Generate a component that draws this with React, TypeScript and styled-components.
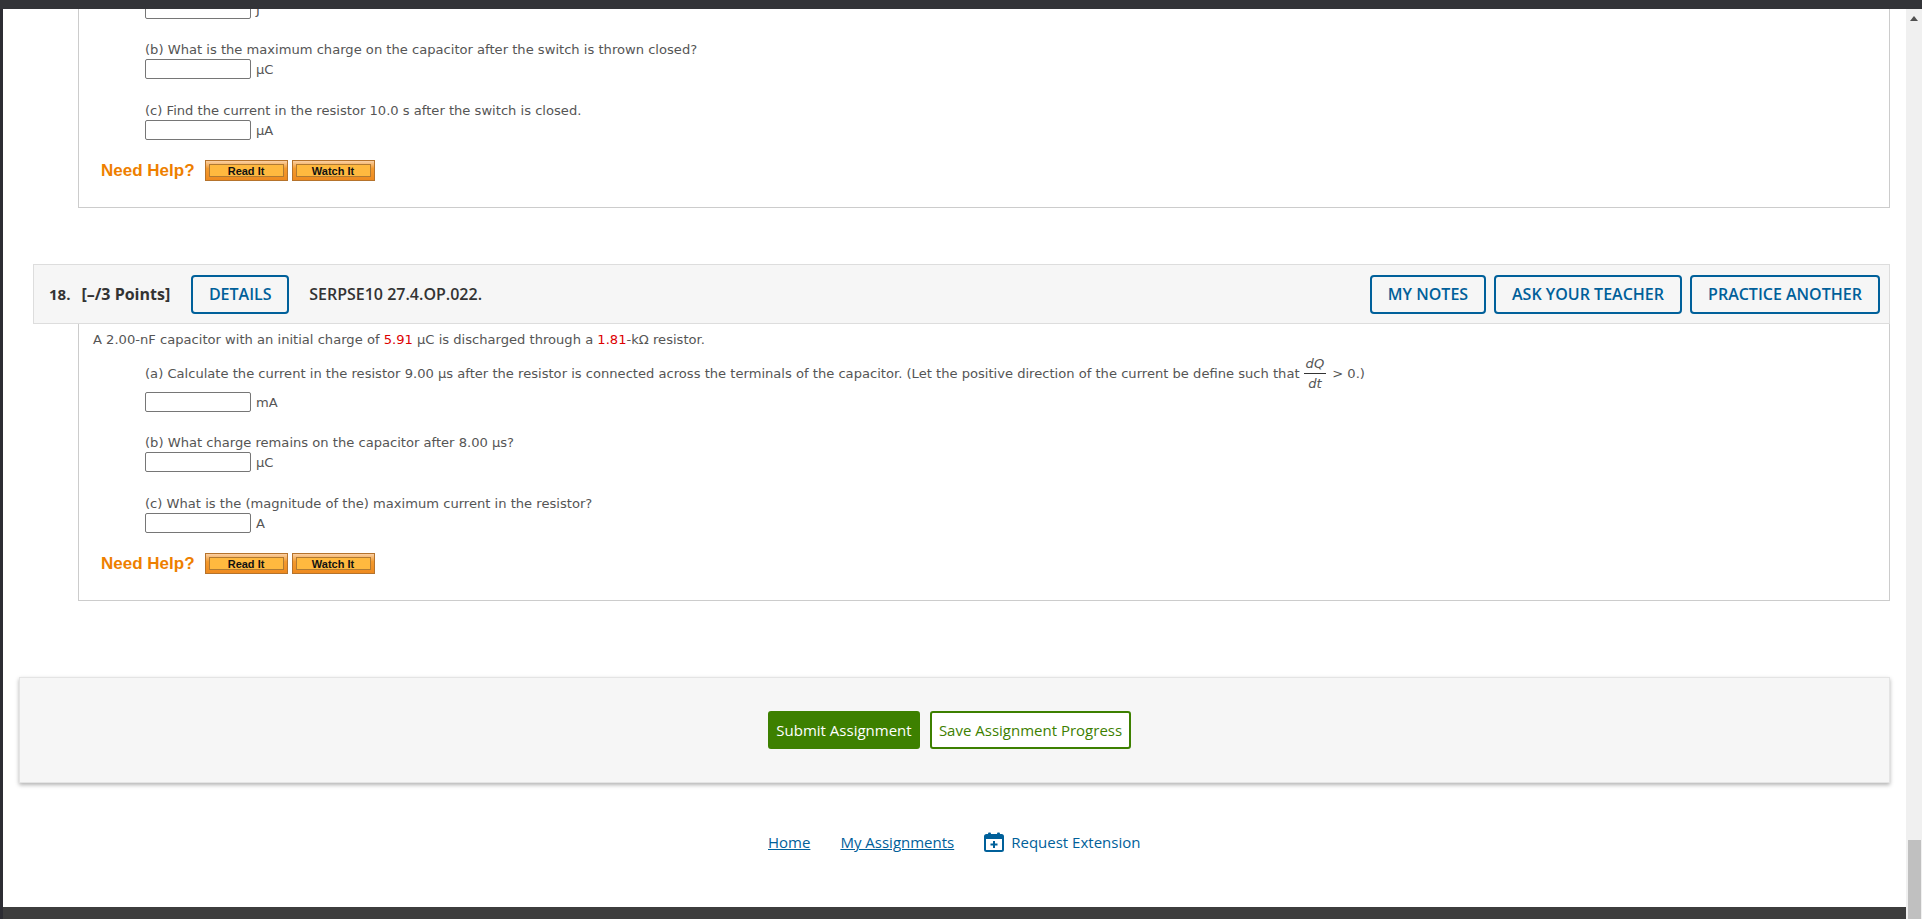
import { createGlobalStyle, styled } from "styled-components";

const GlobalStyle = createGlobalStyle`
  html, body { margin: 0; padding: 0; background: #fff; overflow: hidden; }
`;

const BLUE = "#00609a";
const GREEN = "#3d8000";

const Frame = styled.div`
  display: flex;
  flex-direction: column;
  height: 919px;
  overflow: hidden;
`;

const TopBar = styled.div`
  height: 9px;
  flex: none;
  background: #333438;
`;

const Middle = styled.div`
  display: flex;
  flex: 1;
  min-height: 0;
`;

const LeftEdge = styled.div`
  width: 3px;
  flex: none;
  background: #2d2d33;
`;

const Column = styled.div`
  display: flex;
  flex-direction: column;
  flex: 1;
  min-width: 0;
`;

const Viewport = styled.div`
  flex: 1;
  min-height: 0;
  overflow: hidden;
`;

const Content = styled.div`
  margin-top: -10px;
`;

const BottomBar = styled.div`
  height: 12px;
  flex: none;
  background: #3d3d3d;
`;

const Scrollbar = styled.div`
  width: 16px;
  flex: none;
  display: flex;
  flex-direction: column;
  align-items: flex-end;
  justify-content: space-between;
  background: #f0f0f0;
`;

const ScrollArrow = styled.div`
  width: 0;
  height: 0;
  margin: 7px 4px 0 0;
  border-left: 4px solid transparent;
  border-right: 4px solid transparent;
  border-bottom: 5px solid #505050;
`;

const ScrollThumb = styled.div`
  width: 13px;
  height: 79px;
  margin-right: 1px;
  background: #c0c0c0;
`;

const QuestionBody = styled.div<{ $top?: number }>`
  margin: 0 16px 0 75px;
  padding: ${({ $top }) => $top ?? 0}px 0 26px 66px;
  border: 1px solid #cccccc;
  border-top: 0;
  font-family: "DejaVu Sans", Verdana, sans-serif;
  font-size: 13.1px;
  line-height: 20px;
  color: #555555;
`;

const Intro = styled.div`
  margin: 0 0 13px -52px;
`;

const Red = styled.span`
  color: #dd0000;
`;

const Prompt = styled.div`
  display: flex;
  align-items: flex-start;
  height: 20px;
  line-height: 22px;
  white-space: pre;
`;

const Fraction = styled.span`
  display: inline-flex;
  flex-direction: column;
  align-items: center;
  align-self: center;
  margin: 0 6px 0 4px;
  font-style: italic;
  line-height: 15px;
`;

const Numerator = styled.span`
  padding: 0 2px 2px;
  border-bottom: 1px solid #333333;
`;

const Denominator = styled.span`
  padding-top: 2px;
`;

const AnswerRow = styled.div<{ $top?: number; $bottom?: number }>`
  display: flex;
  align-items: center;
  gap: 5px;
  height: 20px;
  margin: ${({ $top }) => $top ?? 0}px 0 ${({ $bottom }) => $bottom ?? 20}px;
`;

const AnswerInput = styled.div`
  box-sizing: border-box;
  width: 106px;
  height: 20px;
  background: #fff;
  border: 1px solid #767676;
  border-radius: 2px;
`;

const AnswerUnit = styled.span`
  padding-top: 2px;
`;

const HelpRow = styled.div`
  display: flex;
  align-items: center;
  height: 21px;
  margin-left: -44px;
`;

const HelpLabel = styled.span`
  margin-right: 10px;
  font-family: "Liberation Sans", Arial, sans-serif;
  font-size: 17px;
  font-weight: 700;
  color: #ee7f00;
`;

const HelpButton = styled.span`
  box-sizing: border-box;
  display: flex;
  width: 83px;
  height: 21px;
  margin-right: 4px;
  padding: 3px;
  border: 1px solid #b5732c;
  background: linear-gradient(#fad0a4, #f39a2e 40%, #ee8a1f);
`;

const HelpButtonFace = styled.span`
  flex: 1;
  display: flex;
  align-items: center;
  justify-content: center;
  border: 1px solid #b07a33;
  background: #ffb93f;
  font-family: "Liberation Sans", Arial, sans-serif;
  font-size: 11px;
  font-weight: 700;
  color: #111111;
`;

const QuestionHeader = styled.div`
  box-sizing: border-box;
  display: flex;
  align-items: center;
  height: 60px;
  margin: 56px 16px 0 30px;
  padding: 0 9px 0 15px;
  background: #f6f6f6;
  border: 1px solid #dddddd;
  font-family: "Open Sans", sans-serif;
  font-size: 16px;
  color: #333333;
`;

const QuestionNumber = styled.span`
  margin-right: 11px;
  font-weight: 700;
  font-size: 15px;
`;

const Points = styled.span`
  margin-right: 13px;
  font-size: 16px;
  font-weight: 700;
`;

const Reference = styled.span`
  margin-left: 20px;
  font-weight: 600;
`;

const Spacer = styled.span`
  flex: 1;
`;

const OutlineButton = styled.span<{ $width: number }>`
  box-sizing: border-box;
  display: flex;
  align-items: center;
  justify-content: center;
  width: ${({ $width }) => $width}px;
  height: 39px;
  margin-left: 8px;
  border: 2px solid ${BLUE};
  border-radius: 4px;
  background: #f6f6f6;
  font-weight: 600;
  color: ${BLUE};
  &:first-of-type {
    margin-left: 0;
  }
`;

const SubmitPanel = styled.div`
  display: flex;
  justify-content: center;
  gap: 10px;
  box-sizing: border-box;
  height: 106px;
  margin: 76px 16px 0 16px;
  padding: 33px 10px 0 0;
  background: #f6f6f6;
  border: 1px solid #e4e4e4;
  box-shadow: 0 2px 4px rgba(0, 0, 0, 0.3);
  font-family: "Open Sans", sans-serif;
  font-size: 15px;
`;

const SubmitButton = styled.span<{ $solid?: boolean }>`
  box-sizing: border-box;
  display: flex;
  align-items: center;
  justify-content: center;
  height: 38px;
  width: ${({ $solid }) => ($solid ? 152 : 201)}px;
  border: 2px solid ${GREEN};
  border-radius: 3px;
  background: ${({ $solid }) => ($solid ? GREEN : "#fff")};
  color: ${({ $solid }) => ($solid ? "#fff" : GREEN)};
`;

const FooterNav = styled.div`
  display: flex;
  align-items: center;
  height: 24px;
  margin-top: 47px;
  padding-left: 765px;
  font-family: "Open Sans", sans-serif;
  font-size: 15px;
  color: ${BLUE};
`;

const FooterLink = styled.span`
  margin-right: 30px;
  text-decoration: underline;
`;

const FooterAction = styled.span`
  display: flex;
  align-items: center;
  gap: 7px;
`;

function CalendarPlus() {
  return (
    <svg width="20" height="20" viewBox="0 0 20 20" aria-hidden="true">
      <rect x="1" y="3" width="18" height="16" rx="1.5" fill="none" stroke={BLUE} strokeWidth="2" />
      <rect x="1" y="3" width="18" height="4" fill={BLUE} />
      <rect x="4" y="0.5" width="3" height="4" rx="1" fill={BLUE} />
      <rect x="13" y="0.5" width="3" height="4" rx="1" fill={BLUE} />
      <path d="M10 9v7M6.5 12.5h7" stroke={BLUE} strokeWidth="2" fill="none" />
    </svg>
  );
}

function Help() {
  return (
    <HelpRow>
      <HelpLabel>Need Help?</HelpLabel>
      <HelpButton>
        <HelpButtonFace>Read It</HelpButtonFace>
      </HelpButton>
      <HelpButton>
        <HelpButtonFace>Watch It</HelpButtonFace>
      </HelpButton>
    </HelpRow>
  );
}

function Answer({ unit, top, bottom }: { unit: string; top?: number; bottom?: number }) {
  return (
    <AnswerRow $top={top} $bottom={bottom}>
      <AnswerInput />
      <AnswerUnit>{unit}</AnswerUnit>
    </AnswerRow>
  );
}

export default function App() {
  return (
    <Frame>
      <GlobalStyle />
      <TopBar />
      <Middle>
        <LeftEdge />
        <Column>
          <Viewport>
            <Content>
              <QuestionBody>
                <Answer unit="J" />
                <Prompt>(b) What is the maximum charge on the capacitor after the switch is thrown closed?</Prompt>
                <Answer unit="μC" bottom={21} />
                <Prompt>(c) Find the current in the resistor 10.0 s after the switch is closed.</Prompt>
                <Answer unit="μA" />
                <Help />
              </QuestionBody>

              <QuestionHeader>
                <QuestionNumber>18.</QuestionNumber>
                <Points>[–/3 Points]</Points>
                <OutlineButton $width={98}>DETAILS</OutlineButton>
                <Reference>SERPSE10 27.4.OP.022.</Reference>
                <Spacer />
                <OutlineButton $width={116}>MY NOTES</OutlineButton>
                <OutlineButton $width={188}>ASK YOUR TEACHER</OutlineButton>
                <OutlineButton $width={190}>PRACTICE ANOTHER</OutlineButton>
              </QuestionHeader>

              <QuestionBody $top={6}>
                <Intro>
                  A 2.00-nF capacitor with an initial charge of <Red>5.91</Red> μC is discharged through a{" "}
                  <Red>1.81</Red>-kΩ resistor.
                </Intro>
                <Prompt>
                  (a) Calculate the current in the resistor 9.00 μs after the resistor is connected across the
                  terminals of the capacitor. (Let the positive direction of the current be define such that
                  <Fraction>
                    <Numerator>dQ</Numerator>
                    <Denominator>dt</Denominator>
                  </Fraction>
                  {"> 0.)"}
                </Prompt>
                <Answer unit="mA" top={9} />
                <Prompt>(b) What charge remains on the capacitor after 8.00 μs?</Prompt>
                <Answer unit="μC" bottom={21} />
                <Prompt>(c) What is the (magnitude of the) maximum current in the resistor?</Prompt>
                <Answer unit="A" />
                <Help />
              </QuestionBody>

              <SubmitPanel>
                <SubmitButton $solid>Submit Assignment</SubmitButton>
                <SubmitButton>Save Assignment Progress</SubmitButton>
              </SubmitPanel>

              <FooterNav>
                <FooterLink>Home</FooterLink>
                <FooterLink>My Assignments</FooterLink>
                <FooterAction>
                  <CalendarPlus />
                  Request Extension
                </FooterAction>
              </FooterNav>
            </Content>
          </Viewport>
          <BottomBar />
        </Column>
        <Scrollbar>
          <ScrollArrow />
          <ScrollThumb />
        </Scrollbar>
      </Middle>
    </Frame>
  );
}
